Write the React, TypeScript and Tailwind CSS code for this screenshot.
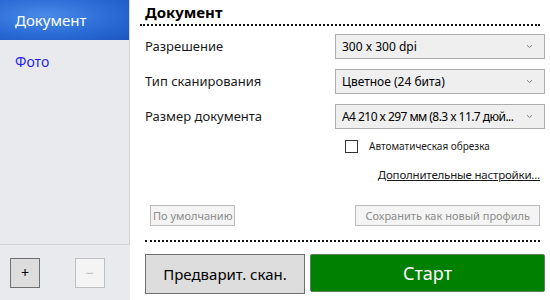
import React from 'react';

const font = { fontFamily: '"Segoe UI", "Noto Sans", "Open Sans", sans-serif' };

function Chevron() {
  return (
    <svg width="7" height="5" viewBox="0 0 7 5" className="shrink-0 text-[#808080]">
      <path d="M1 1.2 L3.5 3.6 L6 1.2" fill="none" stroke="currentColor" strokeWidth="1" />
    </svg>
  );
}

function Select({ value, tight }: { value: string; tight?: boolean }) {
  return (
    <div className="flex h-[25px] w-[210px] items-center justify-between border border-[#adadad] bg-[#efefef] pl-[6px] pr-[11px] text-[12px] text-black">
      <span className={tight ? 'whitespace-nowrap tracking-[-0.55px]' : 'whitespace-nowrap'}>{value}</span>
      <Chevron />
    </div>
  );
}

function Row({ label, value, tight }: { label: string; value: string; tight?: boolean }) {
  return (
    <div className="flex h-[25px] items-center justify-between">
      <span className="text-[13px] text-[#1a1a1a]">{label}</span>
      <Select value={value} tight={tight} />
    </div>
  );
}

function Dots() {
  return <div className="h-0 border-t-[2px] border-dotted border-[#111]" />;
}

export default function App() {
  return (
    <div className="flex h-[300px] w-[550px] bg-white" style={font}>
      {/* Sidebar */}
      <div className="flex w-[130px] flex-col bg-[#e8eaed]">
        <div className="flex flex-1 flex-col border-r border-b border-[#d2d4d6]">
          <div className="flex h-[40px] items-center bg-[radial-gradient(ellipse_at_35%_40%,#4a8ae8_0%,#2a6cd6_55%,#1c55c0_100%)] pl-[15px] text-[15px] text-white">
            Документ
          </div>
          <div className="pl-[15px] pt-[11px] text-[14px] text-[#2a1ff0]">Фото</div>
        </div>
        <div className="flex h-[55px] items-center gap-[35px] pl-[10px]">
          <button className="flex h-[30px] w-[30px] items-center justify-center border border-[#707070] bg-[#dddddd] text-[14px] text-black">
            +
          </button>
          <button className="flex h-[30px] w-[30px] items-center justify-center border border-[#bfbfbf] bg-[#f4f4f4] text-[14px] text-[#bfbfbf]">
            −
          </button>
        </div>
      </div>

      {/* Main */}
      <div className="flex flex-1 flex-col pl-[15px] pr-[5px]">
        <div className="pt-[2px] text-[15px] font-bold leading-[20px] text-black">Документ</div>
        <div className="-ml-[5px] mt-[2px] mr-[5px]">
          <Dots />
        </div>
        <div className="mt-[8px] flex flex-col gap-[10px]">
          <Row label="Разрешение" value="300 x 300 dpi" />
          <Row label="Тип сканирования" value="Цветное (24 бита)" />
          <Row label="Размер документа" value="A4 210 x 297 мм (8.3 x 11.7 дюй..." tight />
        </div>
        <div className="mt-[10px] flex items-center pl-[200px]">
          <div className="h-[13px] w-[13px] border border-[#333] bg-white" />
          <span className="ml-[11px] text-[10px] text-[#1a1a1a]">Автоматическая обрезка</span>
        </div>
        <div className="mt-[12px] flex justify-end pr-[5px]">
          <span className="text-[11.5px] tracking-[-0.2px] text-[#1a1a1a] underline">Дополнительные настройки...</span>
        </div>
        <div className="mt-[22px] flex items-center justify-between pl-[5px] pr-[5px]">
          <button className="h-[21px] border border-[#bcbcbc] bg-[#f4f4f4] px-[2px] text-[11px] text-[#8c8c8c]">
            По умолчанию
          </button>
          <button className="h-[21px] border border-[#bcbcbc] bg-[#f4f4f4] px-[9px] text-[11px] text-[#8c8c8c]">
            Сохранить как новый профиль
          </button>
        </div>
        <div className="mt-[14px] mr-[5px]">
          <Dots />
        </div>
        <div className="mt-[12px] flex gap-[5px]">
          <button className="h-[40px] w-[160px] border border-[#707070] bg-[#dddddd] text-[15px] text-black">
            Предварит. скан.
          </button>
          <button className="h-[38px] w-[235px] rounded-[2px] border border-[#5f7f5f] bg-[#008000] text-[18px] text-white">
            Старт
          </button>
        </div>
      </div>
    </div>
  );
}
